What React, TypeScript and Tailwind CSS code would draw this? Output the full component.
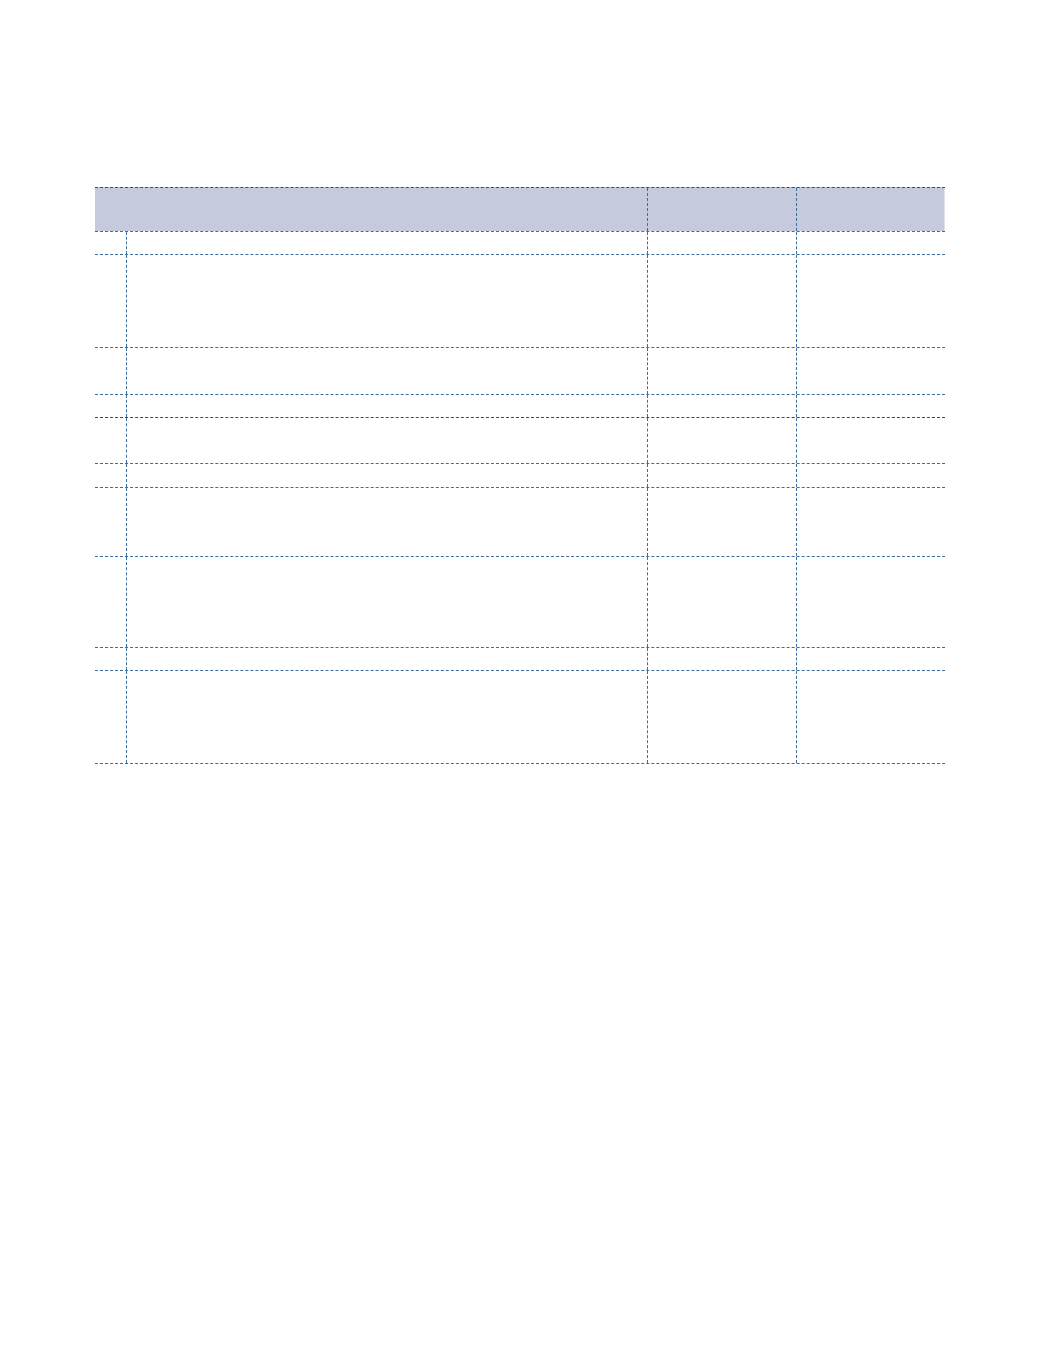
import React from "react";

const rows = [23, 93, 47, 23, 46, 24, 69, 91, 23, 93];

const line = "border-[#3b6e9e] border-dashed";

const App = () => {
  return (
    <div className="min-h-[1353px] w-[1039px] bg-white pt-[187px] pl-[95px] font-['Liberation_Sans',sans-serif]">
      <div className={`w-[850px] border-b ${line}`}>
        <div className={`flex h-[44px] border-t bg-[#c5cbdd] border-[#23527f] border-dashed`}>
          <div className={`w-[553px] border-r ${line}`} />
          <div className={`w-[149px] border-r ${line}`} />
          <div className="w-[148px] border-r border-[#dfe3ec]" />
        </div>
        {rows.map((h, i) => (
          <div
            key={i}
            className={`flex border-t ${i === 4 ? "border-[#23527f] border-dashed" : line}`}
            style={{ height: h }}
          >
            <div className={`w-[32px] border-r ${line}`} />
            <div className={`w-[521px] border-r ${line}`} />
            <div className={`w-[149px] border-r ${line}`} />
            <div className="w-[148px]" />
          </div>
        ))}
      </div>
    </div>
  );
};

export default App;
